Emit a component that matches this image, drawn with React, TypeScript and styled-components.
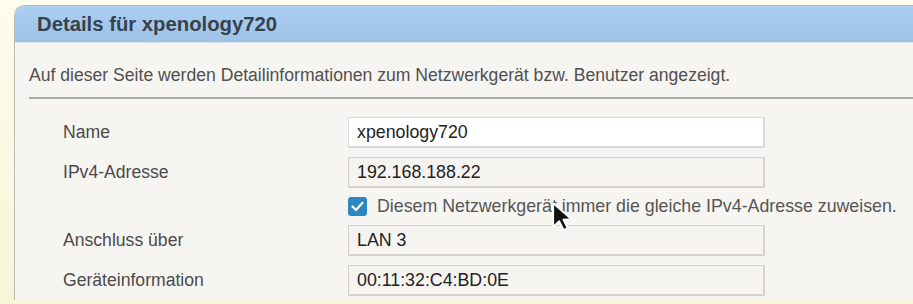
import React from 'react';
import styled, { createGlobalStyle } from 'styled-components';

const GlobalStyle = createGlobalStyle`
  html, body {
    margin: 0;
    padding: 0;
    width: 913px;
    height: 304px;
    overflow: hidden;
    background: linear-gradient(180deg, #fefcec 0%, #f8f5d8 100%);
    font-family: 'Liberation Sans', Arial, sans-serif;
  }
`;

type Field = {
  label: string;
  value: string;
  editable?: boolean;
};

const topFields: Field[] = [
  { label: 'Name', value: 'xpenology720', editable: true },
  { label: 'IPv4-Adresse', value: '192.168.188.22' },
];

const bottomFields: Field[] = [
  { label: 'Anschluss über', value: 'LAN 3' },
  { label: 'Geräteinformation', value: '00:11:32:C4:BD:0E' },
];

export default function App() {
  const renderRow = (f: Field) => (
    <ROW key={f.label}>
      <LABEL>{f.label}</LABEL>
      <INPUT_BOX editable={!!f.editable}>{f.value}</INPUT_BOX>
    </ROW>
  );

  return (
    <PAGE>
      <GlobalStyle />
      <PANEL>
        <HEADER>Details für xpenology720</HEADER>
        <CONTENT>
          <INTRO>Auf dieser Seite werden Detailinformationen zum Netzwerkgerät bzw. Benutzer angezeigt.</INTRO>
          <DIVIDER />
          <FORM>
            {topFields.map(renderRow)}
            <ROW>
              <LABEL />
              <CHECK_WRAP>
                <CHECKBOX>
                  <svg width="13" height="11" viewBox="0 0 13 11">
                    <path d="M1.5 5.5 L5 9 L11.5 1.8" fill="none" stroke="#fff" strokeWidth="2.2" strokeLinecap="round" strokeLinejoin="round" />
                  </svg>
                </CHECKBOX>
                <CHECK_TEXT>Diesem Netzwerkgerät immer die gleiche IPv4-Adresse zuweisen.</CHECK_TEXT>
              </CHECK_WRAP>
            </ROW>
            {bottomFields.map(renderRow)}
          </FORM>
        </CONTENT>
      </PANEL>
      <CURSOR width="24" height="30" viewBox="0 0 12 15">
        <path d="M0.6 0.6 L0.6 12.4 L3.6 9.6 L5.8 14 L7.8 13 L5.7 8.8 L9.8 8.6 Z" fill="#111" stroke="#fff" strokeWidth="0.9" strokeLinejoin="round" />
      </CURSOR>
    </PAGE>
  );
}

const PAGE = styled.div`
  position: relative;
  padding: 5px 0 0 14px;
  height: 299px;
  box-sizing: border-box;
`;

const PANEL = styled.section`
  background: #f7f5f2;
  border: 1px solid #b8bcb2;
  border-right: none;
  border-bottom: none;
  border-top-left-radius: 10px;
  height: 100%;
  overflow: hidden;
`;

const HEADER = styled.header`
  height: 36px;
  line-height: 37px;
  padding-left: 22px;
  background: linear-gradient(180deg, #aacff2 0%, #9ec3e7 100%);
  border-top: 1px solid #9aa9b8;
  border-bottom: 1px solid #dbe5ee;
  margin-top: -1px;
  font-size: 20.3px;
  font-weight: 700;
  color: #38424d;
  white-space: nowrap;
`;

const CONTENT = styled.div`
  padding: 22px 0 0 14px;
`;

const INTRO = styled.p`
  margin: 0;
  font-size: 17.6px;
  line-height: 21px;
  color: #505050;
  white-space: nowrap;
`;

const DIVIDER = styled.hr`
  margin: 11px 0 0;
  border: none;
  height: 2px;
  background: #a9aea9;
`;

const FORM = styled.div`
  display: flex;
  flex-direction: column;
  gap: 9px;
  padding: 18px 0 0 34px;
`;

const ROW = styled.div`
  display: grid;
  grid-template-columns: 285px 417px;
  align-items: center;
`;

const LABEL = styled.span`
  font-size: 17.6px;
  color: #4a4a4a;
  white-space: nowrap;
`;

const INPUT_BOX = styled.div<{ editable: boolean }>`
  height: 31px;
  box-sizing: border-box;
  display: flex;
  align-items: center;
  padding-left: 8px;
  border: 2px solid ${({ editable }) => (editable ? '#dcdad6' : '#d6d3ce')};
  border-width: 1px 2px 2px 1px;
  background: ${({ editable }) => (editable ? '#ffffff' : '#f6f4f1')};
  font-size: 17.8px;
  color: #222;
  white-space: nowrap;
`;

const CHECK_WRAP = styled.label`
  display: flex;
  align-items: center;
  gap: 10px;
  white-space: nowrap;
  height: 19px;
`;

const CHECKBOX = styled.span`
  width: 19px;
  height: 19px;
  border-radius: 3px;
  background: #2f87c2;
  display: flex;
  align-items: center;
  justify-content: center;
  flex-shrink: 0;
`;

const CHECK_TEXT = styled.span`
  font-size: 17.8px;
  color: #555;
`;

const CURSOR = styled.svg`
  position: absolute;
  left: 552px;
  top: 202px;
`;
